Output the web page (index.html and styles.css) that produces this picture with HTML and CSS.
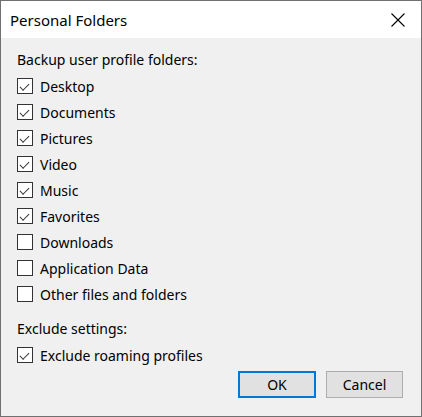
FILE: index.html
```html
<!DOCTYPE html>
<html>
<head>
<meta charset="utf-8">
<link rel="stylesheet" href="styles.css">
</head>
<body>
<div class="window">
  <div class="titlebar">
    <span class="title">Personal Folders</span>
    <svg class="close" width="14" height="14" viewBox="0 0 14 14"><path d="M0.5 0.5 L13.5 13.5 M13.5 0.5 L0.5 13.5" stroke="#000" stroke-width="1.1" fill="none"/></svg>
  </div>
  <div class="content">
    <div class="label">Backup user profile folders:</div>
    <div class="row"><span class="box checked"></span><span>Desktop</span></div>
    <div class="row"><span class="box checked"></span><span>Documents</span></div>
    <div class="row"><span class="box checked"></span><span>Pictures</span></div>
    <div class="row"><span class="box checked"></span><span>Video</span></div>
    <div class="row"><span class="box checked"></span><span>Music</span></div>
    <div class="row"><span class="box checked"></span><span>Favorites</span></div>
    <div class="row"><span class="box"></span><span>Downloads</span></div>
    <div class="row"><span class="box"></span><span>Application Data</span></div>
    <div class="row"><span class="box"></span><span>Other files and folders</span></div>
    <div class="label second">Exclude settings:</div>
    <div class="row"><span class="box checked"></span><span>Exclude roaming profiles</span></div>
    <div class="buttons">
      <button class="btn default">OK</button>
      <button class="btn">Cancel</button>
    </div>
  </div>
</div>
</body>
</html>
```

FILE: styles.css
```css
html, body {
  margin: 0;
  padding: 0;
}
body {
  font-family: "Segoe UI", "Noto Sans", "Liberation Sans", sans-serif;
  font-size: 14px;
  color: #000;
  background: #fff;
}
.window {
  width: 422px;
  height: 417px;
  box-sizing: border-box;
  border: 1px solid #707070;
  background: #f0f0f0;
  display: flex;
  flex-direction: column;
}
.titlebar {
  height: 37px;
  background: #fff;
  display: flex;
  align-items: center;
  justify-content: space-between;
  padding: 0 16px 0 9px;
  flex: none;
}
.title {
  font-size: 15px;
}
.close {
  display: block;
}
.content {
  padding: 9px 16px 0 16px;
  display: flex;
  flex-direction: column;
}
.label {
  height: 26px;
  line-height: 26px;
}
.label.second {
  margin-top: 9px;
}
.row {
  height: 26px;
  display: flex;
  align-items: center;
  gap: 7px;
}
.box {
  width: 16px;
  height: 16px;
  box-sizing: border-box;
  border: 1px solid #333;
  background: #fff;
  position: relative;
  flex: none;
}
.box.checked::after {
  content: "";
  position: absolute;
  left: 4px;
  top: 1px;
  width: 4px;
  height: 8px;
  border-right: 1px solid #333;
  border-bottom: 1px solid #333;
  transform: rotate(45deg) translate(1px, 1px);
}
.buttons {
  margin-top: 3px;
  display: flex;
  justify-content: flex-end;
  gap: 10px;
  padding-right: 2px;
}
.btn {
  width: 77px;
  height: 27px;
  box-sizing: border-box;
  background: #e1e1e1;
  border: 1px solid #adadad;
  font-family: inherit;
  font-size: 14px;
  color: #000;
  padding: 0;
}
.btn.default {
  width: 78px;
  border: 2px solid #0078d7;
}
```
